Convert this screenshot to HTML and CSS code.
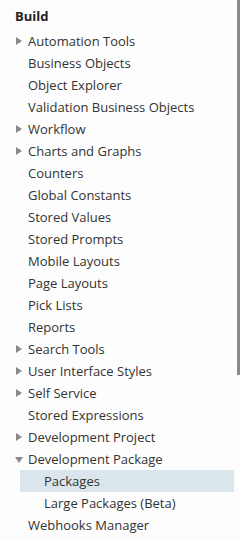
FILE: index.html
```html
<!DOCTYPE html>
<html lang="en">
<head>
    <meta charset="UTF-8" />
    <meta name="viewport" content="width=device-width, initial-scale=1.0" />
    <title>Build Menu</title>
    <link rel="stylesheet" href="styles.css">
</head>
<body>
    <div class="panel">
        <h2 class="title">Build</h2>
        <ul class="menu">
            <li class="item closed">Automation Tools</li>
            <li class="item">Business Objects</li>
            <li class="item">Object Explorer</li>
            <li class="item">Validation Business Objects</li>
            <li class="item closed">Workflow</li>
            <li class="item closed">Charts and Graphs</li>
            <li class="item">Counters</li>
            <li class="item">Global Constants</li>
            <li class="item">Stored Values</li>
            <li class="item">Stored Prompts</li>
            <li class="item">Mobile Layouts</li>
            <li class="item">Page Layouts</li>
            <li class="item">Pick Lists</li>
            <li class="item">Reports</li>
            <li class="item closed">Search Tools</li>
            <li class="item closed">User Interface Styles</li>
            <li class="item closed">Self Service</li>
            <li class="item">Stored Expressions</li>
            <li class="item closed">Development Project</li>
            <li class="item open">Development Package</li>
            <li class="item sub selected">Packages</li>
            <li class="item sub">Large Packages (Beta)</li>
            <li class="item">Webhooks Manager</li>
        </ul>
        <div class="scrollbar"></div>
    </div>
</body>
</html>
```

FILE: styles.css
```css
body {
    margin: 0;
    background-color: #fdfdfd;
    font-family: "Open Sans", Arial, sans-serif;
    color: #333;
}
.panel {
    position: relative;
    width: 240px;
    height: 541px;
    overflow: hidden;
}
.title {
    margin: 0;
    padding: 6px 0 0 15px;
    height: 24px;
    font-size: 13px;
    font-weight: bold;
    line-height: 20px;
    color: #222;
}
.menu {
    list-style: none;
    margin: 0;
    padding: 0;
}
.item {
    position: relative;
    height: 22px;
    line-height: 22px;
    padding-left: 28px;
    font-size: 13px;
    white-space: nowrap;
}
.item.closed::before {
    content: "";
    position: absolute;
    left: 16px;
    top: 7px;
    border-left: 6px solid #8a8a8a;
    border-top: 4px solid transparent;
    border-bottom: 4px solid transparent;
}
.item.open::before {
    content: "";
    position: absolute;
    left: 15px;
    top: 9px;
    border-top: 6px solid #8a8a8a;
    border-left: 4px solid transparent;
    border-right: 4px solid transparent;
}
.item.sub {
    padding-left: 44px;
}
.item.selected {
    background-color: #dae6ec;
    margin-left: 20px;
    margin-right: 6px;
    padding-left: 24px;
}
.scrollbar {
    position: absolute;
    top: 0;
    right: 0;
    width: 3px;
    height: 375px;
    background-color: #8a8a8a;
}
```
